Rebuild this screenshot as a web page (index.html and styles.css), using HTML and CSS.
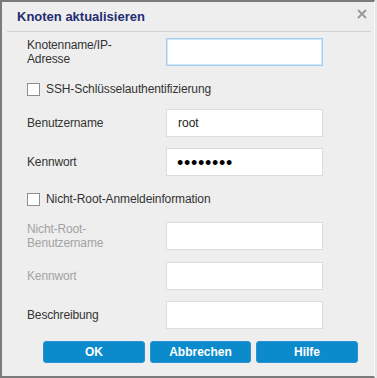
FILE: index.html
```html
<!DOCTYPE html>
<html lang="de">
<head>
<meta charset="utf-8">
<title>Knoten aktualisieren</title>
<link rel="stylesheet" href="styles.css">
</head>
<body>
<div class="dialog">
  <div class="header">
    <span class="title">Knoten aktualisieren</span>
    <span class="close" aria-label="Schließen">
      <svg width="10" height="10" viewBox="0 0 10 10"><path d="M1 1 L9 9 M9 1 L1 9" stroke="#9a9a9a" stroke-width="2" fill="none"/></svg>
    </span>
  </div>
  <div class="content">
    <div class="row">
      <label class="label two">Knotenname/IP-<br>Adresse</label>
      <input class="field focus" type="text" value="">
    </div>
    <label class="check first-check"><span class="box"></span><span>SSH-Schlüsselauthentifizierung</span></label>
    <div class="row after-check">
      <label class="label">Benutzername</label>
      <input class="field" type="text" value="root">
    </div>
    <div class="row gap11">
      <label class="label">Kennwort</label>
      <input class="field pw" type="password" value="abcdefgh">
    </div>
    <label class="check second-check"><span class="box"></span><span>Nicht-Root-Anmeldeinformation</span></label>
    <div class="row after-check2">
      <label class="label two disabled">Nicht-Root-<br>Benutzername</label>
      <input class="field" type="text" value="">
    </div>
    <div class="row gap12">
      <label class="label disabled">Kennwort</label>
      <input class="field" type="password" value="">
    </div>
    <div class="row gap11">
      <label class="label">Beschreibung</label>
      <input class="field" type="text" value="">
    </div>
    <div class="buttons">
      <button class="btn w102">OK</button>
      <button class="btn w101">Abbrechen</button>
      <button class="btn w102">Hilfe</button>
    </div>
  </div>
</div>
</body>
</html>
```
FILE: styles.css
```css
html, body {
  margin: 0;
  padding: 0;
  background: #e6e6e6;
}
body {
  font-family: "Liberation Sans", Arial, sans-serif;
  font-size: 12px;
  color: #333;
}
.dialog {
  box-sizing: border-box;
  width: 375px;
  height: 378px;
  background: #eeeeee;
  border-top: 2px solid #7b7b7b;
  border-left: 2px solid #7b7b7b;
  border-bottom: 2px solid #7b7b7b;
  border-right: 1px solid #fafafa;
}
.header {
  position: relative;
  margin: 0 3px 0 5px;
  height: 29px;
  border-bottom: 1px solid #d3d3d3;
  padding-left: 10px;
  line-height: 29px;
}
.title {
  font-size: 13px;
  font-weight: bold;
  color: #1f2d72;
}
.close {
  position: absolute;
  left: 350px;
  top: 7px;
  width: 10px;
  height: 10px;
  line-height: 0;
}
.content {
  padding: 6px 0 0 25px;
}
.row {
  display: flex;
  align-items: center;
}
.label {
  width: 139px;
  line-height: 14px;
  letter-spacing: -0.15px;
}
.label.two {
  align-self: flex-start;
}
.disabled {
  color: #a3a3a3;
}
.field {
  box-sizing: border-box;
  width: 157px;
  height: 28px;
  margin: 0;
  border: 1px solid #dcdcdc;
  background: #fff;
  padding: 0 0 0 11px;
  font-family: "Liberation Sans", Arial, sans-serif;
  font-size: 12px;
  color: #222;
  outline: none;
}
.field.focus {
  border-color: #a4cff2;
  box-shadow: inset 0 0 0 1px #cfe5f8;
}
.field.pw {
  font-size: 18px;
  letter-spacing: 0.7px;
  color: #000;
  padding-left: 10px;
  padding-top: 2px;
}
.check {
  display: flex;
  align-items: center;
  height: 20px;
  gap: 6px;
  letter-spacing: -0.1px;
}
.box {
  box-sizing: border-box;
  width: 13px;
  height: 13px;
  border: 1px solid #8f8f8f;
  background: #fff;
}
.first-check { margin-top: 13px; }
.after-check { margin-top: 10px; }
.gap11 { margin-top: 11px; }
.gap12 { margin-top: 12px; }
.second-check { margin-top: 13px; }
.after-check2 { margin-top: 13px; }
.buttons {
  display: flex;
  gap: 5px;
  margin: 12px 0 0 16px;
}
.btn {
  box-sizing: border-box;
  height: 22px;
  border: 1px solid #2a93cf;
  border-radius: 3px;
  background: #0b8bcc;
  color: #fff;
  font-family: "Liberation Sans", Arial, sans-serif;
  font-size: 12px;
  font-weight: bold;
  padding: 0;
}
.w102 { width: 102px; }
.w101 { width: 101px; }
```
